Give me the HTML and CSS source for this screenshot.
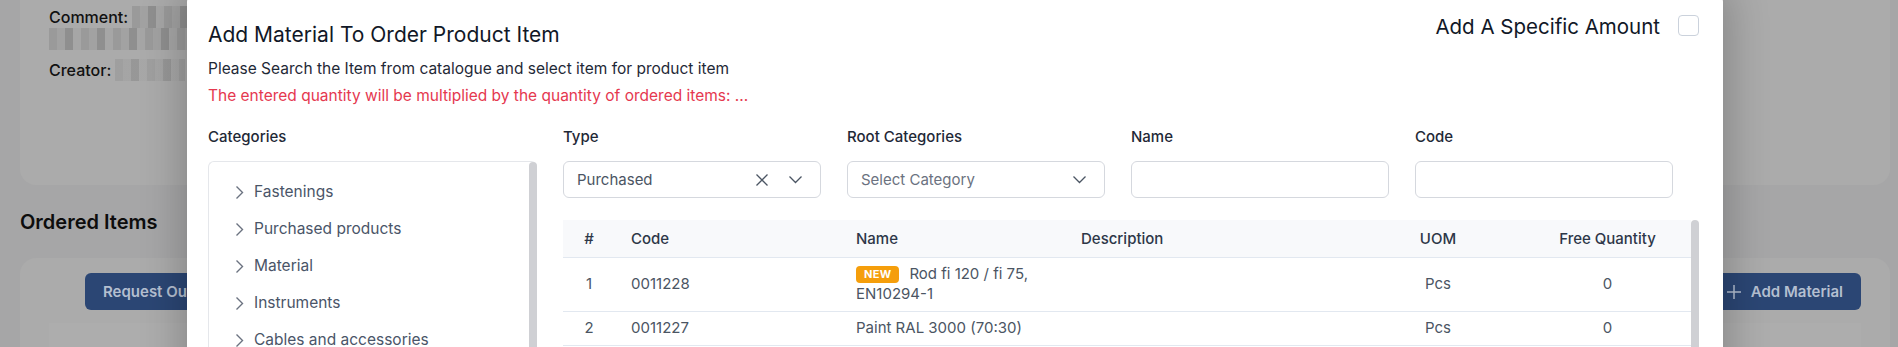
FILE: index.html
```html
<!DOCTYPE html>
<html lang="en">
<head>
<meta charset="utf-8">
<title>Add Material To Order Product Item</title>
<link rel="stylesheet" href="styles.css">
</head>
<body>
<div class="page">
  <section class="card card-info">
    <div class="info-row"><span class="info-label">Comment:</span><span class="blur blur-a"></span></div>
    <div class="blur blur-b"></div>
    <div class="info-row info-row-creator"><span class="info-label">Creator:</span><span class="blur blur-c"></span></div>
  </section>
  <h2 class="section-title">Ordered Items</h2>
  <section class="card card-items">
    <div class="items-toolbar">
      <button class="btn btn-request">Request Our Offer</button>
      <button class="btn btn-add">
        <svg width="16" height="16" viewBox="0 0 16 16"><path d="M8 1v14M1 8h14" stroke="#b4bfd0" stroke-width="1.5" fill="none"/></svg>
        Add Material
      </button>
    </div>
    <div class="items-area"></div>
  </section>
</div>

<div class="modal">
  <div class="modal-header">
    <h1 class="modal-title">Add Material To Order Product Item</h1>
    <label class="amount-toggle">
      <span>Add A Specific Amount</span>
      <span class="checkbox"></span>
    </label>
  </div>
  <p class="modal-sub">Please Search the Item from catalogue and select item for product item</p>
  <p class="modal-warn">The entered quantity will be multiplied by the quantity of ordered items: ...</p>

  <div class="modal-body">
    <div class="cat-col">
      <div class="field-label">Categories</div>
      <div class="tree-box">
        <ul class="tree">
          <li><svg width="9" height="15" viewBox="0 0 9 15"><path d="M1.5 1.5l6 6-6 6" stroke="#6b7280" stroke-width="1.4" fill="none"/></svg>Fastenings</li>
          <li><svg width="9" height="15" viewBox="0 0 9 15"><path d="M1.5 1.5l6 6-6 6" stroke="#6b7280" stroke-width="1.4" fill="none"/></svg>Purchased products</li>
          <li><svg width="9" height="15" viewBox="0 0 9 15"><path d="M1.5 1.5l6 6-6 6" stroke="#6b7280" stroke-width="1.4" fill="none"/></svg>Material</li>
          <li><svg width="9" height="15" viewBox="0 0 9 15"><path d="M1.5 1.5l6 6-6 6" stroke="#6b7280" stroke-width="1.4" fill="none"/></svg>Instruments</li>
          <li><svg width="9" height="15" viewBox="0 0 9 15"><path d="M1.5 1.5l6 6-6 6" stroke="#6b7280" stroke-width="1.4" fill="none"/></svg>Cables and accessories</li>
        </ul>
        <div class="scroll-thumb"></div>
      </div>
    </div>

    <div class="main-col">
      <div class="filters">
        <div class="filter">
          <div class="field-label">Type</div>
          <div class="control select">
            <span class="value">Purchased</span>
            <svg class="ico-x" width="14" height="14" viewBox="0 0 14 14"><path d="M1.5 1.5l11 11M12.5 1.5l-11 11" stroke="#4b5563" stroke-width="1.3" fill="none"/></svg>
            <svg class="ico-down" width="15" height="9" viewBox="0 0 15 9"><path d="M1.5 1.5l6 6 6-6" stroke="#4b5563" stroke-width="1.3" fill="none"/></svg>
          </div>
        </div>
        <div class="filter">
          <div class="field-label">Root Categories</div>
          <div class="control select">
            <span class="value placeholder">Select Category</span>
            <svg class="ico-down" width="15" height="9" viewBox="0 0 15 9"><path d="M1.5 1.5l6 6 6-6" stroke="#4b5563" stroke-width="1.3" fill="none"/></svg>
          </div>
        </div>
        <div class="filter">
          <div class="field-label">Name</div>
          <div class="control"></div>
        </div>
        <div class="filter">
          <div class="field-label">Code</div>
          <div class="control"></div>
        </div>
      </div>

      <div class="table-wrap">
        <table class="items">
          <colgroup>
            <col class="c-num"><col class="c-code"><col class="c-name"><col class="c-desc"><col class="c-uom"><col class="c-qty">
          </colgroup>
          <thead>
            <tr><th class="center">#</th><th>Code</th><th>Name</th><th>Description</th><th class="center">UOM</th><th class="center">Free Quantity</th></tr>
          </thead>
          <tbody>
            <tr>
              <td class="center">1</td><td>0011228</td>
              <td><span class="badge">NEW</span>Rod fi 120 / fi 75, EN10294-1</td>
              <td></td><td class="center">Pcs</td><td class="center">0</td>
            </tr>
            <tr>
              <td class="center">2</td><td>0011227</td>
              <td>Paint RAL 3000 (70:30)</td>
              <td></td><td class="center">Pcs</td><td class="center">0</td>
            </tr>
          </tbody>
        </table>
        <div class="scroll-thumb"></div>
      </div>
    </div>
  </div>
</div>
</body>
</html>
```

FILE: styles.css
```css
* { box-sizing: border-box; }
html, body { margin: 0; padding: 0; }
body {
  width: 1898px;
  height: 347px;
  overflow: hidden;
  position: relative;
  background: #a6a6a7;
  font-family: Inter, "Liberation Sans", sans-serif;
}

/* background page (dimmed) */
.page { padding: 0 8px 0 20px; }
.card { background: #ababab; border-radius: 16px; }
.card-info {
  height: 185px;
  border-radius: 0 0 16px 16px;
  padding: 6px 29px 0;
}
.info-row {
  display: flex;
  align-items: center;
  gap: 4px;
  height: 22px;
  font-size: 16px;
  font-weight: 500;
  color: #111;
}
.info-row-creator { margin-top: 9px; }
.blur {
  display: block;
  height: 22px;
  background:
    repeating-linear-gradient(90deg, #9a9a9a 0 8px, #a2a2a2 8px 16px, #8f8f8f 16px 24px, #a6a6a6 24px 32px);
}
.blur-a { width: 60px; }
.blur-b { width: 140px; }
.blur-c { width: 70px; opacity: .7; }

.section-title {
  margin: 23px 0 22px;
  font-size: 20px;
  line-height: 28px;
  font-weight: 600;
  color: #0d0d0d;
}
.card-items { height: 120px; padding: 15px 29px 0; }
.items-toolbar { display: flex; justify-content: space-between; align-items: center; }
.btn {
  height: 37px;
  border: 0;
  border-radius: 6px;
  background: #2b4674;
  color: #b4bfd0;
  font-family: Inter, "Liberation Sans", sans-serif;
  font-size: 15px;
  font-weight: 600;
  padding: 0 18px;
  display: flex;
  align-items: center;
  gap: 9px;
}
.btn-request { margin-left: 36px; }
.items-area { margin-top: 13px; height: 60px; background: #adadad; }

/* modal */
.modal {
  position: absolute;
  left: 187px;
  top: -6px;
  width: 1536px;
  height: 400px;
  background: #fff;
  border-radius: 8px;
  box-shadow: 0 0 40px 6px rgba(0,0,0,.22);
  padding: 29px 24px 0 21px;
  font-family: Inter, "Liberation Sans", sans-serif;
  color: #1f2937;
}
.modal-header { display: flex; justify-content: space-between; align-items: flex-start; }
.modal-title {
  margin: 0;
  font-size: 21px;
  line-height: 24px;
  font-weight: 400;
  color: #111827;
}
.amount-toggle {
  margin-top: -8px;
  display: flex;
  align-items: center;
  gap: 18px;
  font-size: 20.5px;
  line-height: 24px;
  color: #111827;
}
.checkbox {
  width: 21px;
  height: 21px;
  border: 1px solid #cbd2dc;
  border-radius: 4px;
  margin-top: -3px;
}
.modal-sub { margin: 12px 0 0; font-size: 15.5px; line-height: 20px; color: #1f2937; }
.modal-warn { margin: 7px 0 0; font-size: 15.5px; line-height: 20px; color: #e5384f; }

.modal-body {
  display: grid;
  grid-template-columns: 329px 1fr;
  column-gap: 26px;
  margin-top: 21px;
}
.field-label { font-size: 15px; line-height: 20px; font-weight: 500; color: #1f2937; }

.tree-box {
  margin-top: 14px;
  height: 200px;
  border: 1px solid #e5e7eb;
  border-right: 0;
  border-radius: 6px;
  display: flex;
}
.tree {
  flex: 1;
  list-style: none;
  margin: 0;
  padding: 20px 0 0 26px;
  display: flex;
  flex-direction: column;
  gap: 17px;
}
.tree li {
  display: flex;
  align-items: center;
  gap: 10px;
  font-size: 15.5px;
  line-height: 20px;
  color: #4a5568;
}
.scroll-thumb {
  width: 8px;
  background: #cfd0d4;
  border-radius: 4px 4px 0 0;
  flex: none;
}

.filters {
  display: grid;
  grid-template-columns: repeat(4, 258px);
  column-gap: 26px;
}
.control {
  margin-top: 14px;
  height: 37px;
  border: 1px solid #d5d8de;
  border-radius: 6px;
  display: flex;
  align-items: center;
  padding: 0 17px 0 13px;
}
.select .value { flex: 1; font-size: 15px; color: #4b5563; }
.select .placeholder { color: #6b7280; }
.ico-x { margin-right: 19px; }

.table-wrap { margin-top: 22px; display: flex; height: 200px; }
.items {
  flex: 1;
  border-collapse: collapse;
  table-layout: fixed;
  font-size: 15px;
  line-height: 20px;
  align-self: flex-start;
}
.c-num { width: 52px; }
.c-code { width: 225px; }
.c-name { width: 225px; }
.c-uom { width: 172px; }
.c-qty { width: 167px; }
.items th {
  background: #f8f9fb;
  font-weight: 500;
  color: #2d3748;
  text-align: left;
  padding: 9px 16px 8px;
  border-bottom: 1px solid #e2e8f0;
}
.items td {
  padding: 6px 16px 7px;
  color: #4b5563;
  border-bottom: 1px solid #e2e8f0;
  vertical-align: middle;
}
.items .center { text-align: center; padding-left: 0; padding-right: 0; }
.badge {
  display: inline-block;
  background: #f59e0b;
  color: #fff;
  font-size: 11px;
  font-weight: 700;
  line-height: 17px;
  padding: 0 8px;
  border-radius: 4px;
  margin-right: 10px;
  vertical-align: 1px;
  letter-spacing: .3px;
}
```
